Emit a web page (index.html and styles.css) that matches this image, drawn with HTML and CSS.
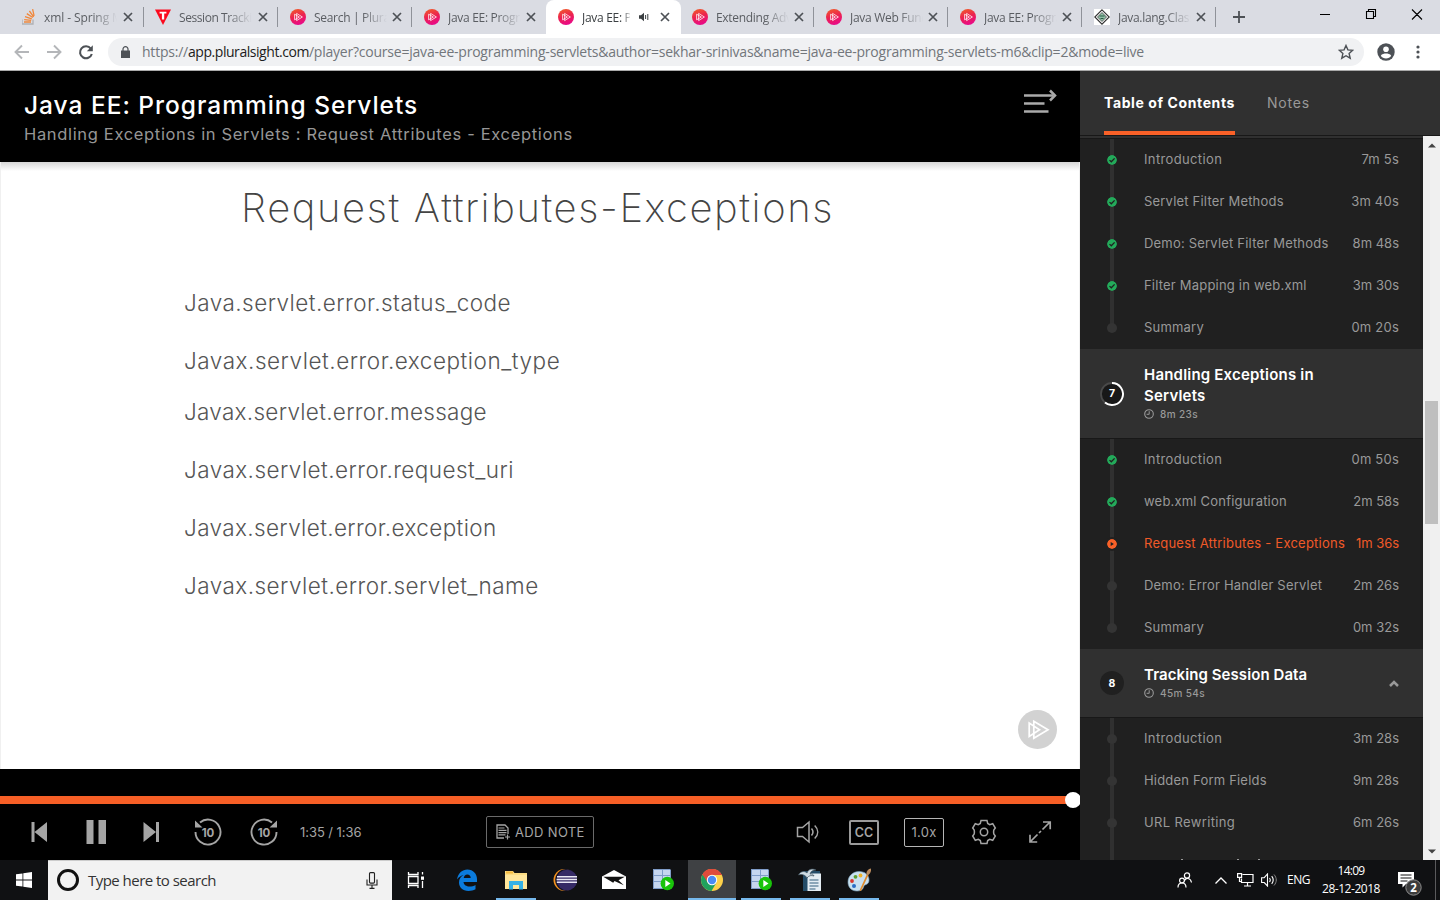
FILE: index.html
```html
<!DOCTYPE html>
<html lang="en">
<head>
<meta charset="utf-8">
<title>Java EE: Programming Servlets</title>
<link rel="stylesheet" href="styles.css">
</head>
<body>
<svg class="defs" width="0" height="0">
  <defs>
    <linearGradient id="psg" x1="0.2" y1="0" x2="0.5" y2="1"><stop offset="0" stop-color="#f15b2a"/><stop offset="0.5" stop-color="#ec2250"/><stop offset="1" stop-color="#e80a89"/></linearGradient>
    <symbol id="ps" viewBox="0 0 16 16"><circle cx="8" cy="8" r="8" fill="url(#psg)"/><path d="M4.6 5.2v5.6l4.8-2.8zM6.6 4.4v7.2L12.4 8z" fill="none" stroke="#fff" stroke-width="0.9" opacity=".85"/></symbol>
    <symbol id="x" viewBox="0 0 10 10"><path d="M1 1l8 8M9 1l-8 8" stroke="#4d5156" stroke-width="1.7" fill="none"/></symbol>
    <symbol id="ok" viewBox="0 0 10 10"><circle cx="5" cy="5" r="5" fill="#23aa5a"/><path d="M2.500 5.100l1.800 1.700 3.300-3.400" stroke="#202020" stroke-width="1.300" fill="none"/></symbol>
    <symbol id="clock" viewBox="0 0 10 10"><circle cx="5" cy="5" r="4.3" fill="none" stroke="#999" stroke-width="1.1"/><path d="M5.2 2.2v3.1H2.6" fill="none" stroke="#999" stroke-width="1"/></symbol>
    <symbol id="server" viewBox="0 0 24 24"><path d="M2 1h17l1 1v18l-1 1H2z" fill="#7f9cc8"/><path d="M3 2h8v5H3zM12 2h7v5h-7zM3 8h8v5H3zM12 8h7v5h-7zM3 14h8v6H3zM12 14h7v6h-7z" fill="#c6d6ef"/><circle cx="16.3" cy="15.5" r="6.7" fill="#19c40a"/><path d="M14.3 12v7l5.2-3.5z" fill="#fff"/></symbol>
  </defs>
</svg>

<div class="tabstrip">
  <div class="tab so"><svg class="fav" viewBox="0 0 16 16"><path d="M0 10.5V15h11v-4.5" fill="none" stroke="#b0b0b4" stroke-width="1.3"/><path d="M2 13h7M2.2 10.6l7 .8M3 7.7l6.8 2.2M4.8 4.6l6 3.9M7.4 2l4.3 5.8M10.6.2l1.5 6.6" stroke="#f0873b" stroke-width="1.3"/></svg><span class="tt">xml - Spring MVC</span><svg class="cl"><use href="#x"/></svg></div>
  <div class="tab tm"><svg class="fav" viewBox="0 0 16 16"><path d="M0 .5h16L8 16z" fill="#fb0a1e"/><path d="M4.6 2.7h6.8v1.9H9.2v6H6.9v-6H4.6z" fill="#fff"/></svg><span class="tt">Session Tracking</span><svg class="cl"><use href="#x"/></svg></div>
  <div class="tab"><svg class="fav"><use href="#ps"/></svg><span class="tt">Search | Pluralsight</span><svg class="cl"><use href="#x"/></svg></div>
  <div class="tab last"><svg class="fav"><use href="#ps"/></svg><span class="tt">Java EE: Programming</span><svg class="cl"><use href="#x"/></svg></div>
  <div class="tab on"><svg class="fav"><use href="#ps"/></svg><span class="tt short">Java EE: Programming</span><svg class="spk" viewBox="0 0 10 10"><path d="M0 3.3h2L5 .8v8.4L2 6.7H0z" fill="#3c4043"/><path d="M6.6 3v4M8.8 2v6" stroke="#3c4043" stroke-width="1"/></svg><svg class="cl"><use href="#x"/></svg></div>
  <div class="tab"><svg class="fav"><use href="#ps"/></svg><span class="tt">Extending Advanced</span><svg class="cl"><use href="#x"/></svg></div>
  <div class="tab"><svg class="fav"><use href="#ps"/></svg><span class="tt">Java Web Fundamentals</span><svg class="cl"><use href="#x"/></svg></div>
  <div class="tab"><svg class="fav"><use href="#ps"/></svg><span class="tt">Java EE: Programming</span><svg class="cl"><use href="#x"/></svg></div>
  <div class="tab"><svg class="fav" viewBox="0 0 16 16"><path d="M0 0h16v16H0z" fill="#fff"/><path d="M8 .8L15.2 8 8 15.2.8 8z" fill="none" stroke="#303030" stroke-width="1.1"/><path d="M8 3.500l4.500 4.500L8 12.500 3.500 8z" fill="#8fc0a6" stroke="#444" stroke-width=".8"/><path d="M5.500 7h5M6.500 9.500h3" stroke="#2c5a44" stroke-width="1.200"/></svg><span class="tt">Java.lang.ClassCast</span><svg class="cl"><use href="#x"/></svg></div>
  <svg class="plus" viewBox="0 0 12 12"><path d="M6 0v12M0 6h12" stroke="#4d5156" stroke-width="1.8"/></svg>
  <svg class="winctl" viewBox="0 0 104 12"><path d="M0 6.5h10M46.500 3.500h7v7h-7zM48.500 3.500v-2h7v7h-2M92 1.500l10 10M102 1.500l-10 10" fill="none" stroke="#000" stroke-width="1.1"/></svg>
</div>

<div class="toolbar">
  <svg class="nav" viewBox="0 0 100 36"><path d="M29 18H16M22 11.500L15.500 18l6.500 6.500M47 18h13M54 11.500l6.500 6.500-6.500 6.500" fill="none" stroke="#b4b6b9" stroke-width="1.900"/><path d="M90.800 14.600A6 6 0 1 0 91.800 20" fill="none" stroke="#4d5156" stroke-width="2.100"/><path d="M92.800 11.200v6h-6z" fill="#4d5156"/></svg>
  <div class="omni">
    <svg class="lock" viewBox="0 0 9 12"><path d="M0 4.500h9V12H0z" fill="#4d5156"/><path d="M2 5V3a2.500 2.300 0 0 1 5 0v2" fill="none" stroke="#4d5156" stroke-width="1.200"/></svg>
    <span class="url"><span class="scheme">https://</span><span class="host">app.pluralsight.com</span>/player?course=java-ee-programming-servlets&amp;author=sekhar-srinivas&amp;name=java-ee-programming-servlets-m6&amp;clip=2&amp;mode=live</span>
    <svg class="star" viewBox="0 0 16 16"><path d="M8 1.500l1.900 4.400 4.800.4-3.600 3.200 1.100 4.700L8 11.700l-4.200 2.500 1.100-4.700L1.300 6.300l4.800-.4z" fill="none" stroke="#4d5156" stroke-width="1.400"/></svg>
  </div>
  <svg class="user" viewBox="0 0 18 18"><circle cx="9" cy="9" r="8.700" fill="#4d5156"/><circle cx="9" cy="6.300" r="2.800" fill="#fff"/><path d="M3.800 12.700c1-2 3.500-2.300 5.200-2.300s4.200.3 5.200 2.300a6.300 6.300 0 0 1-10.400 0z" fill="#fff"/></svg>
  <svg class="dots" viewBox="0 0 4 16"><circle cx="2" cy="3" r="1.600"/><circle cx="2" cy="8" r="1.600"/><circle cx="2" cy="13" r="1.600"/></svg>
</div>

<div class="main">
  <div class="player">
    <div class="head">
      <div><div class="course">Java EE: Programming Servlets</div><div class="clip">Handling Exceptions in Servlets : Request Attributes - Exceptions</div></div>
      <svg class="menu" viewBox="0 0 34 26"><path d="M1 6.500H30M1 14.500H21.500M1 22.500H25.500" stroke="#aaa" stroke-width="2.500"/><path d="M27 1.500l5 5-5 5" fill="none" stroke="#aaa" stroke-width="2.500"/></svg>
    </div>
    <div class="slide">
      <div class="stitle">Request Attributes-Exceptions</div>
      <div class="line l1">Java.servlet.error.status_code</div>
      <div class="line l2">Javax.servlet.error.exception_type</div>
      <div class="line l3">Javax.servlet.error.message</div>
      <div class="line l4">Javax.servlet.error.request_uri</div>
      <div class="line l5">Javax.servlet.error.exception</div>
      <div class="line l6">Javax.servlet.error.servlet_name</div>
      <svg class="wm" viewBox="0 0 39 39"><circle cx="19.500" cy="19.500" r="19.500" fill="#d2d2d2"/><path d="M11.200 13v13.500l10.300-6.800zM15.800 11.200v17L30 19.700z" fill="none" stroke="#fff" stroke-width="1.700"/></svg>
    </div>
    <div class="controls">
      <div class="bar"><i class="knob"></i></div>
      <div class="buttons">
        <svg class="left" viewBox="0 0 290 56" fill="#a5a5a5"><path d="M31.500 18h3v20h-3zM47 18v20L34.500 28zM86.500 16h7v24h-7zM98.500 16h7.500v24h-7.500zM143.500 18v20L156 28zM156 18h3v20h-3z"/><g fill="none" stroke="#a5a5a5" stroke-width="1.900"><path d="M200 18.500A12.500 12.500 0 1 1 195.500 28"/><path d="M272 18.500A12.500 12.500 0 1 0 276.500 28"/></g><path d="M195 16.500v7h7.500zM277 16.500v7h-7.500z"/><g class="ten"><text x="208" y="32.500">10</text><text x="264" y="32.500">10</text></g></svg>
        <span class="time">1:35 / 1:36</span>
        <div class="note"><svg viewBox="0 0 14 16"><path d="M12 10V4L9 1H1v13h7" fill="none" stroke="#a5a5a5" stroke-width="1.300"/><path d="M2.500 4h6M2.500 6.300h8M2.500 8.600h8M2.500 10.900h7M11.500 10.500v5M9 13h5" stroke="#a5a5a5" stroke-width="1.200"/></svg><span>ADD NOTE</span></div>
        <svg class="vol" viewBox="0 0 24 24"><path d="M1.500 7.500h5L13 2v20l-6.500-5.500h-5z" fill="none" stroke="#a5a5a5" stroke-width="1.500"/><path d="M15.500 8.500c1.700 2 1.700 5 0 7M18.700 5.500c4 4 4 9 0 13" fill="none" stroke="#a5a5a5" stroke-width="1.500"/></svg>
        <div class="cc">CC</div>
        <div class="rate">1.0x</div>
        <svg class="gear" viewBox="0 0 26 26"><path d="M10 1.500h6l.7 2.900 2 1.200 3-.9 2.600 4.300-1.500 2a9.500 9.500 0 0 0 0 4l1.500 2-2.600 4.300-3-.9-2 1.200-.7 2.900h-6l-.7-2.900-2-1.200-3 .9-2.600-4.300 1.500-2a9.500 9.500 0 0 0 0-4l-1.500-2 2.600-4.300 3 .9 2-1.200z" fill="none" stroke="#a5a5a5" stroke-width="1.500"/><circle cx="13" cy="13" r="3.700" fill="none" stroke="#a5a5a5" stroke-width="1.500"/></svg>
        <svg class="full" viewBox="0 0 24 24"><path d="M15 2h7.200v7.200M22 2l-7.500 7.500M2 14.800V22h7.200M2 22l7.500-7.500M11 13l2-2" fill="none" stroke="#a5a5a5" stroke-width="1.700"/></svg>
      </div>
    </div>
  </div>

  <div class="side">
    <div class="sidetabs"><span class="toc">Table of Contents</span><span class="notes">Notes</span></div>
    <div class="sidebody">
      <div class="list">
        <div class="edge"></div>
        <div class="clips first">
          <div class="row"><svg class="st"><use href="#ok"/></svg><span class="nm w1">Introduction</span><span class="du">7m 5s</span></div>
          <div class="row"><svg class="st"><use href="#ok"/></svg><span class="nm">Servlet Filter Methods</span><span class="du">3m 40s</span></div>
          <div class="row"><svg class="st"><use href="#ok"/></svg><span class="nm">Demo: Servlet Filter Methods</span><span class="du tight">8m 48s</span></div>
          <div class="row"><svg class="st"><use href="#ok"/></svg><span class="nm">Filter Mapping in web.xml</span><span class="du tight">3m 30s</span></div>
          <div class="row end"><i class="st dot"></i><span class="nm">Summary</span><span class="du">0m 20s</span></div>
        </div>
        <div class="mod seven">
          <svg class="num" viewBox="0 0 24 24"><circle cx="12" cy="12" r="11" fill="#181818" stroke="#4a4a4a" stroke-width="1.800"/><path d="M12 1a11 11 0 1 1-7 19.500" fill="none" stroke="#fff" stroke-width="1.900"/><text x="12" y="15.200">7</text></svg>
          <div class="mb"><div class="mt m7">Handling Exceptions in<br>Servlets</div><div class="md"><svg><use href="#clock"/></svg>8m 23s</div></div>
        </div>
        <div class="clips">
          <div class="row"><svg class="st"><use href="#ok"/></svg><span class="nm w1">Introduction</span><span class="du">0m 50s</span></div>
          <div class="row"><svg class="st"><use href="#ok"/></svg><span class="nm">web.xml Configuration</span><span class="du tight">2m 58s</span></div>
          <div class="row now"><svg class="st" viewBox="0 0 10 10"><circle cx="5" cy="5" r="5" fill="#f96128"/><path d="M3.700 3v4l3.200-2z" fill="#202020"/></svg><span class="nm">Request Attributes - Exceptions</span><span class="du one">1m 36s</span></div>
          <div class="row"><i class="st dot"></i><span class="nm">Demo: Error Handler Servlet</span><span class="du tight">2m 26s</span></div>
          <div class="row end"><i class="st dot"></i><span class="nm">Summary</span><span class="du tight">0m 32s</span></div>
        </div>
        <div class="mod eight">
          <svg class="num" viewBox="0 0 24 24"><circle cx="12" cy="12" r="12" fill="#202020"/><text x="12" y="16">8</text></svg>
          <div class="mb"><div class="mt m8">Tracking Session Data</div><div class="md"><svg><use href="#clock"/></svg>45m 54s</div></div>
          <svg class="chev" viewBox="0 0 10 7"><path d="M1 6l4-4 4 4" fill="none" stroke="#999" stroke-width="2.500"/></svg>
        </div>
        <div class="clips">
          <div class="row"><i class="st dot"></i><span class="nm w1">Introduction</span><span class="du tight">3m 28s</span></div>
          <div class="row"><i class="st dot"></i><span class="nm">Hidden Form Fields</span><span class="du tight">9m 28s</span></div>
          <div class="row"><i class="st dot"></i><span class="nm w1">URL Rewriting</span><span class="du tight">6m 26s</span></div>
          <div class="row peek"><i></i><i></i><i></i></div>
        </div>
      </div>
      <div class="scroll"><svg viewBox="0 0 8 5"><path d="M0 4.500L4 .5l4 4z"/></svg><i class="thumb"></i><svg viewBox="0 0 8 5"><path d="M0 .5L4 4.500l4-4z"/></svg></div>
    </div>
  </div>
</div>

<div class="taskbar">
  <div class="start"><svg viewBox="0 0 16 16" fill="#fff"><path d="M0 2.300l6.500-.9v6.200H0zM7.300 1.300L16 0v7.600H7.300zM0 8.400h6.500v6.200L0 13.700zM7.300 8.400H16V16l-8.700-1.300z"/></svg></div>
  <div class="search"><i class="cortana"></i><span>Type here to search</span><svg viewBox="0 0 12 17"><rect x="3.500" y=".6" width="5" height="10.500" rx="1" fill="none" stroke="#222" stroke-width="1.100"/><path d="M1 7.500V13h10V7.500M6 13v3.400M3.500 16.400h5" fill="none" stroke="#222" stroke-width="1.100"/></svg></div>
  <div class="app tv"><svg viewBox="0 0 17 16"><path d="M1.500 0v2.500h9.500V0M1.500 4.500h9.500v7H1.500zM1.500 16v-2.500h9.500V16M15.500 0v2.500M15.500 9v7" fill="none" stroke="#fff" stroke-width="1.300"/><path d="M14 4.500h3v3.300h-3z" fill="#fff"/></svg></div>
  <div class="app"><svg viewBox="0 0 24 24"><path d="M2 11.500C3 5 7.500 1.500 12.300 1.500c6 0 9.700 4.500 9.700 9.500v3H8.500c.3 3 3 4.500 6 4.500 2.300 0 4.300-.6 6-1.600v4.300c-2 1.100-4.300 1.700-7 1.700-6 0-9.500-3.700-9.500-8.500 0-3.300 1.800-6 4.600-7.400C6.500 7.300 3.700 9 2 11.500zM8.700 10h7c0-2.200-1.300-3.600-3.400-3.600-2 0-3.300 1.500-3.600 3.600z" fill="#0b7bdc"/></svg></div>
  <div class="app run"><svg viewBox="0 0 24 24"><path d="M1 3h8l1.500 2H23v16H1z" fill="#fbdc83"/><path d="M2 3.500h7v2H2z" fill="#f5b93c"/><path d="M1 7h22v14H1z" fill="#ffe69b"/><path d="M5 13h14v8.500h-4V17H9v4.500H5z" fill="#35b1e5"/></svg></div>
  <div class="app"><svg viewBox="0 0 24 24"><circle cx="11.500" cy="12" r="11" fill="#f7941e"/><circle cx="13.200" cy="12" r="11" fill="#14142a"/><circle cx="14" cy="12" r="10.300" fill="#352a66"/><path d="M4 8.800h20M3.600 11.500h20.800M3.800 14.200h20.400" stroke="#e9e7f4" stroke-width="1.500"/></svg></div>
  <div class="app"><svg viewBox="0 0 24 24"><path d="M0 8.500L12 2l12 6.500V21H0z" fill="#fff"/><path d="M1.200 8.700l10 6 1.300-1.700 9.300 4.200-5.300-5L22.800 8.700z" fill="#111"/></svg></div>
  <div class="app"><svg><use href="#server"/></svg></div>
  <div class="app active"><svg viewBox="0 0 24 24"><circle cx="12" cy="12" r="11" fill="#fdd04a"/><path d="M12 12L2.500 6.500A11 11 0 0 0 11.500 23l5-8.500z" fill="#1fa15d"/><path d="M12 12L2.500 6.500A11 11 0 0 1 21.800 7H12z" fill="#df4b3c"/><path d="M2.500 6.500l5.300 8L12 7h9.800A11 11 0 0 0 2.500 6.500z" fill="#df4b3c"/><circle cx="12" cy="12" r="5.200" fill="#fff"/><circle cx="12" cy="12" r="4.200" fill="#4a8bf4"/></svg></div>
  <div class="app run"><svg><use href="#server"/></svg></div>
  <div class="app run"><svg viewBox="0 0 24 24"><path d="M5 3h17v20H5z" fill="#244c68"/><path d="M9.500 9l3-3.500H23V23H9.500z" fill="#e4edf3"/><path d="M11.500 12h9M11.500 15h9M11.500 18h9M11.500 21h6" stroke="#35607f" stroke-width="1.200"/><path d="M.5 7C3 2.500 7 3 9 5c1-3.500 5-5 9-3-3 0-5 1-6 4 2-.5 3.500.5 4 2-3-1-5-.5-7 2C8 7.500 4 5.500.5 7z" fill="#cfdbe3" stroke="#3a4d5a" stroke-width=".7"/></svg></div>
  <div class="app run"><svg viewBox="0 0 24 24"><path d="M1 14C1 8 6 3.500 12 3.500S22 7 22 12s-4 4-5 6-1 5-7 5-9-4-9-9z" fill="#c9e0ef" stroke="#7da7c2" stroke-width=".6"/><circle cx="5" cy="13" r="1.900" fill="#d8352c"/><circle cx="8.500" cy="8.800" r="1.900" fill="#5a9e2f"/><circle cx="13.500" cy="7.500" r="1.900" fill="#f0b428"/><circle cx="7" cy="18" r="2" fill="#2a6cc4"/><path d="M12.500 22.500L20 6l1.500 1-7.500 16z" fill="#e08b2c"/><path d="M19.500 6.500C19 3.500 21 1 24 .5c.5 3-1 5.500-2.700 6.500z" fill="#b98a5c"/></svg></div>
  <div class="tray">
    <svg class="t1" viewBox="0 0 16 16"><g fill="none" stroke="#fff" stroke-width="1.200"><circle cx="10" cy="3.500" r="2.600"/><path d="M7.500 8.500c1.500-3 6-3 7 2"/><circle cx="5" cy="8.500" r="2.400"/><path d="M1 15.500c0-6 8-6 8 0"/></g></svg>
    <svg class="t2" viewBox="0 0 12 7"><path d="M.5 6.500L6 1l5.500 5.500" fill="none" stroke="#fff" stroke-width="1.300"/></svg>
    <svg class="t3" viewBox="0 0 17 14"><path d="M5.500 1.500h10.500v8H4.500V5.500M10.500 9.500v3.500M7 13h7M.6 .6h4v3.800h-4zM2.500 4.500V8.500h2" fill="none" stroke="#fff" stroke-width="1.200"/></svg>
    <svg class="t4" viewBox="0 0 17 14"><path d="M.6 4.700h2.600L6.500 1v12L3.200 9.500H.6z" fill="none" stroke="#fff" stroke-width="1.100"/><path d="M8.500 5c1 1.300 1 2.700 0 4M10.700 3.200c2 2.500 2 5.100 0 7.600" fill="none" stroke="#fff" stroke-width="1.100"/><path d="M13 1.500c3 3.500 3 7.500 0 11" fill="none" stroke="#888" stroke-width="1"/></svg>
    <span class="eng">ENG</span>
    <div class="clock"><span class="hm">14:09</span><span class="dt">28-12-2018</span></div>
    <svg class="act" viewBox="0 0 26 26"><path d="M1 2h16v12h-8l-3.500 3.500V14H1z" fill="#fff"/><path d="M3.500 5h11M3.500 8h11M3.500 11h7" stroke="#111" stroke-width="1"/><circle cx="16.500" cy="17.500" r="7.700" fill="#3c3c3c" stroke="#8d8d8d" stroke-width="1"/><text x="16.500" y="21.500">2</text></svg>
    <i class="peekline"></i>
  </div>
</div>
</body>
</html>
```

FILE: styles.css
```css
* { box-sizing: border-box; }
body { margin: 0; width: 1440px; height: 900px; overflow: hidden; display: flex; flex-direction: column; font-family: Inter, "Liberation Sans", sans-serif; background: #000; }
svg { display: block; flex: none; }
.defs { position: absolute; }

/* browser chrome */
.tabstrip { height: 34px; background: #dadce3; display: flex; align-items: center; padding-left: 10px; font: 12px "Open Sans", sans-serif; letter-spacing: -0.3px; color: #5a5d62; }
.tab { width: 134px; height: 34px; display: flex; align-items: center; padding-left: 12px; position: relative; }
.tab:not(.on)::after { content: ""; position: absolute; right: 0; top: 7px; height: 20px; width: 1px; background: #8f9299; }
.tab.last::after { display: none; }
.tab.on { background: #fff; border-radius: 8px 8px 0 0; color: #3c4043; width: 135px; margin-right: -1px; }
.fav { width: 16px; height: 16px; }
.tt { width: 73px; margin: 0 5px 0 8px; overflow: hidden; white-space: nowrap; -webkit-mask-image: linear-gradient(90deg, #000 48px, transparent 73px); mask-image: linear-gradient(90deg, #000 48px, transparent 73px); }
.tt.short { width: 48px; -webkit-mask-image: linear-gradient(90deg, #000 40px, transparent 50px); mask-image: linear-gradient(90deg, #000 40px, transparent 50px); }
.so .tt { margin: 0 6px; letter-spacing: -0.1px; }
.tm { padding-left: 11px; }
.tm .tt { letter-spacing: -0.42px; margin-right: 6px; }
.spk { width: 10px; height: 10px; margin: 0 11px 0 4px; }
.cl { width: 10px; height: 10px; }
.plus { width: 12px; height: 12px; margin-left: 17px; }
.winctl { width: 104px; height: 12px; margin: -6px 0 0 75px; }
.toolbar { height: 37px; background: #fff; border-bottom: 1px solid #a9a9a9; display: flex; align-items: center; }
.nav { width: 100px; height: 36px; margin-right: 8px; }
.omni { width: 1256px; height: 28px; border-radius: 14px; background: #f0f1f3; display: flex; align-items: center; padding: 0 10px 0 14px; }
.lock { width: 9px; height: 12px; margin: -1px 11px 0 -1px; }
.url { flex: 1; font: 14px/20px "Open Sans", sans-serif; color: #72767b; letter-spacing: -0.22px; white-space: nowrap; margin-left: 1px; }
.scheme { letter-spacing: -0.22px; }
.host { color: #1c1c20; letter-spacing: -0.45px; }
.star { width: 16px; height: 16px; }
.user { width: 18px; height: 18px; margin-left: 13px; }
.dots { width: 4px; height: 16px; margin-left: 21px; fill: #4d5156; }

/* player */
.main { height: 789px; display: flex; }
.player { width: 1080px; display: flex; flex-direction: column; }
.head { height: 91px; background: #000; display: flex; justify-content: space-between; padding: 18px 23px 0 24px; }
.course { font-size: 24.500px; font-weight: 500; line-height: 32px; color: #fff; letter-spacing: 0.98px; white-space: nowrap; }
.clip { font-size: 16.500px; line-height: 26px; color: #969696; letter-spacing: 0.66px; white-space: nowrap; }
.menu { width: 34px; height: 26px; }
.slide { height: 607px; background: linear-gradient(#d6d6d6, #fff 9px); position: relative; color: #444; border-left: 1px solid #f0f0f0; border-right: 1px solid #f0f0f0; padding-left: 183px; overflow: hidden; }
.stitle { font-size: 40px; font-weight: 200; line-height: 50px; margin: 21px 0 0 57px; letter-spacing: 1.6px; white-space: nowrap; }
.line { font-size: 22.500px; font-weight: 300; line-height: 30px; white-space: nowrap; color: #555; letter-spacing: 0.44px; margin-top: 28px; }
.l1 { margin-top: 55px; letter-spacing: 0.46px; }
.l2 { letter-spacing: 0.53px; }
.l3 { margin-top: 21px; letter-spacing: 0.29px; }
.l4 { letter-spacing: 0.45px; }
.l5 { letter-spacing: 0.37px; }
.l6 { letter-spacing: 0.46px; }
.wm { position: absolute; width: 39px; height: 39px; right: 22px; bottom: 20px; }
.controls { height: 91px; background: #000; padding-top: 27px; }
.bar { height: 8px; background: #f75f26; position: relative; }
.knob { position: absolute; left: 1065px; top: -4px; width: 16px; height: 16px; border-radius: 50%; background: #fff; clip-path: inset(0 1px 0 0); }
.buttons { height: 56px; display: flex; align-items: center; color: #a5a5a5; }
.left { width: 290px; height: 56px; }
.ten { font: 700 11.500px Inter, sans-serif; text-anchor: middle; }
.time { width: 186px; margin-left: 10px; font-size: 13px; white-space: nowrap; letter-spacing: -0.05px; }
.note { width: 108px; height: 32px; border: 1px solid #6a6a6a; border-radius: 2px; display: flex; align-items: center; padding-left: 9px; font-size: 13px; letter-spacing: 0.35px; white-space: nowrap; gap: 5px; }
.note svg { width: 14px; height: 16px; }
.vol { width: 24px; height: 24px; margin-left: 202px; }
.cc { width: 30px; height: 25px; margin-left: 29px; border: 2px solid #9a9a9a; border-radius: 2px; text-align: center; font-size: 12.500px; font-weight: 600; line-height: 21px; }
.rate { width: 40px; height: 29px; margin-left: 25px; border: 1px solid #b5b5b5; border-radius: 2px; text-align: center; font-size: 13px; line-height: 27px; letter-spacing: 0.25px; }
.gear { width: 26px; height: 26px; margin-left: 27px; }
.full { width: 24px; height: 24px; margin-left: 31px; }

/* sidebar */
.side { width: 360px; background: #303030; display: flex; flex-direction: column; }
.sidetabs { height: 65px; border-bottom: 1px solid #181818; display: flex; padding-left: 24px; line-height: 63px; font-size: 14px; white-space: nowrap; }
.toc { width: 131px; height: 64px; border-bottom: 4px solid #f96128; color: #fff; font-weight: 700; letter-spacing: 0.6px; }
.notes { margin-left: 32px; color: #999; letter-spacing: 0.8px; }
.sidebody { height: 724px; display: flex; }
.list { width: 343px; overflow: hidden; }
.edge { height: 3px; background: #303030; border-bottom: 1px solid #181818; }
.clips { background: #202020; }
.row { height: 42px; display: flex; align-items: center; padding: 0 24px 0 27px; color: #999; font-size: 13px; letter-spacing: 0.2px; white-space: nowrap; background: linear-gradient(#303030, #303030) 30px 0 / 4px 100% no-repeat; }
.row.end { background-size: 4px 21px; }
.row span { padding-bottom: 2px; }
.st { width: 10px; height: 10px; border-radius: 50%; }
.dot { background: #343434; }
.nm { flex: 1; margin-left: 27px; }
.w1 { letter-spacing: 0.36px; }
.du { letter-spacing: 0.22px; }
.du.tight { letter-spacing: 0; }
.du.one { letter-spacing: -0.05px; }
.now { color: #f05a28; }
.now .nm { letter-spacing: 0.235px; }
.now .st { box-shadow: 0 0 0 2px #202020; }
.peek { align-items: flex-start; padding: 15px 0 0 101px; }
.peek i { width: 2px; height: 1px; background: #999; }
.peek i + i { margin-left: 54px; }
.peek i + i + i { margin-left: 19px; }
.mod { background: #303030; border-bottom: 1px solid #181818; display: flex; align-items: center; padding: 0 24px 0 20px; position: relative; }
.seven { height: 90px; }
.eight { height: 69px; }
.num { width: 24px; height: 24px; margin-right: 20px; }
.num text { font: 700 10.500px Inter, sans-serif; fill: #fff; text-anchor: middle; }
.mb { padding-bottom: 2px; }
.mt { font-size: 15px; font-weight: 600; line-height: 21px; color: #fff; white-space: nowrap; }
.m7 { letter-spacing: 0.2px; }
.m8 { letter-spacing: 0.08px; }
.md { display: flex; align-items: center; gap: 6px; font-size: 10px; font-weight: 500; line-height: 16px; color: #999; letter-spacing: 0.38px; }
.md svg { width: 10px; height: 10px; }
.chev { width: 10px; height: 7px; margin-left: auto; }
.scroll { width: 17px; background: #f0f0f0; display: flex; flex-direction: column; align-items: center; padding: 7px 0 6px; fill: #444; }
.scroll svg { width: 8px; height: 5px; }
.thumb { width: 13px; height: 123px; background: #bfbfbf; margin: 253px 0 auto; }

/* taskbar */
.taskbar { height: 40px; background: #101113; display: flex; color: #fff; font-family: "Open Sans", sans-serif; }
.start { width: 48px; display: flex; align-items: center; justify-content: center; }
.start svg { width: 16px; height: 16px; }
.search { width: 344px; background: #f2f2f2; border-top: 1px solid #ccc; display: flex; align-items: center; padding: 0 14px 1px 9px; color: #333; font-size: 15px; letter-spacing: -0.53px; }
.search span { flex: 1; margin-left: 9px; }
.search svg { width: 12px; height: 17px; }
.cortana { width: 22px; height: 22px; border: 3px solid #111; border-radius: 50%; }
.app { width: 49px; height: 40px; display: flex; align-items: center; justify-content: center; position: relative; }
.app svg { width: 24px; height: 24px; }
.app.tv { width: 50px; padding-right: 3px; }
.app.tv svg { width: 17px; height: 16px; }
.app.run::after { content: ""; position: absolute; left: 5px; right: 4px; bottom: 0; height: 2px; background: #76b9ed; }
.app.active { background: #3f4144; border-bottom: 2px solid #76b9ed; width: 48px; margin-left: 1px; }
.app.active svg { margin-top: 2px; }
.tray { flex: 1; display: flex; align-items: center; padding-left: 294px; position: relative; }
.t1 { width: 16px; height: 16px; }
.t2 { width: 12px; height: 7px; margin-left: 22px; }
.t3 { width: 17px; height: 14px; margin-left: 10px; }
.t4 { width: 17px; height: 14px; margin-left: 7px; }
.eng { font-size: 12px; letter-spacing: -0.45px; margin: -2px 0 0 9px; width: 24px; }
.clock { width: 60px; margin-left: 10px; display: flex; flex-direction: column; align-items: center; font-size: 12px; line-height: 18px; letter-spacing: -0.46px; white-space: nowrap; }
.hm { letter-spacing: -0.72px; }
.act { width: 26px; height: 26px; margin: 5px 0 0 16px; }
.act text { font: 700 11.500px "Open Sans", sans-serif; fill: #fff; text-anchor: middle; }
.peekline { position: absolute; right: 4px; top: 0; width: 1px; height: 40px; background: #5a5a5c; }
```
